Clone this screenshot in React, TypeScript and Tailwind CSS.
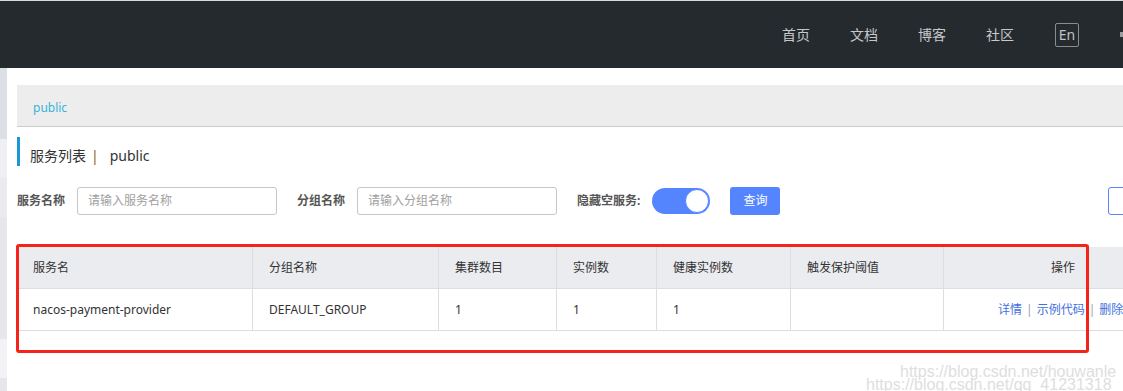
import React from "react";

const columns = [
  { title: "服务名", width: "w-[235px]" },
  { title: "分组名称", width: "w-[186px]" },
  { title: "集群数目", width: "w-[118px]" },
  { title: "实例数", width: "w-[100px]" },
  { title: "健康实例数", width: "w-[134px]" },
  { title: "触发保护阈值", width: "w-[153px]" },
];

const row = ["nacos-payment-provider", "DEFAULT_GROUP", "1", "1", "1", ""];

const navItems = ["首页", "文档", "博客", "社区"];

function SideStrip() {
  return (
    <div className="flex w-[7px] flex-none flex-col">
      <div className="h-[71px] bg-[#dcdfe5]" />
      <div className="h-[39px] bg-[#eff0f3]" />
      <div className="h-[39px] bg-[#e9ebee]" />
      <div className="h-[122px] bg-[#e5e7eb]" />
      <div className="h-[39px] bg-[#f2f3f5]" />
      <div className="flex-1 bg-[#e5e7eb]" />
    </div>
  );
}

export default function App() {
  return (
    <div className="relative h-[391px] w-[1123px] overflow-hidden bg-white font-['Noto_Sans','Noto_Sans_CJK_SC',sans-serif] text-[#333]">
      <div className="h-px bg-[#d9d9d9]" />
      <header className="flex h-[67px] items-center justify-end bg-[#252a2f]">
        <nav className="flex items-center">
          {navItems.map((item) => (
            <a key={item} className="mr-[40px] text-[14px] text-[#c6c8ca]">
              {item}
            </a>
          ))}
          <span className="ml-[1px] flex h-[24px] w-[24px] items-center justify-center rounded-[2px] border border-[#8a8d90] text-[14px] leading-none text-[#bfc1c3]">
            En
          </span>
          <span className="ml-[41px] h-[5px] w-[3px] bg-[#9a9c9e]" />
        </nav>
      </header>

      <div className="flex h-[323px]">
        <SideStrip />
        <main className="flex-1 pl-[10px] pt-[17px]">
          <div className="flex h-[42px] items-center border-b border-[#cccccc] bg-[#ededed] px-[16px] pt-[4px] text-[12px] text-[#36b3d8]">
            public
          </div>

          <div className="mt-[10px] flex h-[29px] items-center border-l-[3px] border-[#1b98d3] pl-[10px] pt-[7px] text-[14px] text-[#333]">
            <span>服务列表</span>
            <span className="ml-[5px] text-[#8a5a2b]">|</span>
            <span className="ml-[11px]">public</span>
          </div>

          <div className="mt-[21px] flex h-[28px] items-center text-[12px]">
            <label className="font-bold text-[#555]">服务名称</label>
            <div className="ml-[12px] flex h-[28px] w-[200px] items-center rounded-[3px] border border-[#c4c6cf] pl-[10px] text-[#a0a0a0]">
              请输入服务名称
            </div>
            <label className="ml-[20px] font-bold text-[#555]">分组名称</label>
            <div className="ml-[12px] flex h-[28px] w-[200px] items-center rounded-[3px] border border-[#c4c6cf] pl-[10px] text-[#a0a0a0]">
              请输入分组名称
            </div>
            <label className="ml-[20px] font-bold text-[#555]">隐藏空服务:</label>
            <div className="ml-[12px] flex h-[26px] w-[58px] items-center justify-end rounded-full bg-[#5584ff] pr-px">
              <div className="h-[24px] w-[24px] rounded-full border border-[#5584ff] bg-white" />
            </div>
            <button className="ml-[20px] h-[28px] w-[50px] rounded-[3px] bg-[#5584ff] text-[12px] text-white">
              查询
            </button>
            <button className="ml-[328px] h-[28px] w-[80px] flex-none rounded-[3px] border border-[#5584ff] bg-white" />
          </div>

          <div className="relative mt-[32px]">
            <div className="flex h-[42px] w-[1200px] items-stretch border-b border-[#dcdee3] bg-[#ebecf0] text-[12px] text-[#333]">
              {columns.map((col, i) => (
                <div
                  key={col.title}
                  className={`${col.width} flex flex-none items-center pl-[16px] ${i > 0 ? "border-l border-[#dcdee3]" : ""}`}
                >
                  {col.title}
                </div>
              ))}
              <div className="flex w-[270px] flex-none items-center border-l border-[#dcdee3] pl-[107px]">
                操作
              </div>
            </div>
            <div className="flex h-[42px] w-[1200px] items-stretch border-b border-[#dcdee3] text-[12px] text-[#333]">
              {row.map((cell, i) => (
                <div
                  key={i}
                  className={`${columns[i].width} flex flex-none items-center pl-[16px] ${i > 0 ? "border-l border-[#dcdee3]" : ""}`}
                >
                  {cell}
                </div>
              ))}
              <div className="flex w-[270px] flex-none items-center whitespace-nowrap border-l border-[#dcdee3] pl-[54px] text-[#3f6fe0]">
                <a>详情</a>
                <span className="mx-[4px] text-[#9aa0b0]">|</span>
                <a>示例代码</a>
                <span className="mx-[4px] text-[#9aa0b0]">|</span>
                <a>删除</a>
              </div>
            </div>

            <div className="pointer-events-none absolute left-[-1px] top-[-3px] h-[109px] w-[1073px] rounded-[3px] border-[3px] border-[#f5231a]" />
          </div>
        </main>
      </div>

      <div className="pointer-events-none absolute left-[900px] top-[364px] whitespace-nowrap font-['Liberation_Sans',sans-serif] text-[16px] leading-[16px] text-[#dedede]">
        https://blog.csdn.net/houwanle
      </div>
      <div className="pointer-events-none absolute left-[866px] top-[377px] whitespace-nowrap font-['Liberation_Sans',sans-serif] text-[16px] leading-[16px] text-[#dedede]">
        https://blog.csdn.net/qq_41231318
      </div>
    </div>
  );
}
